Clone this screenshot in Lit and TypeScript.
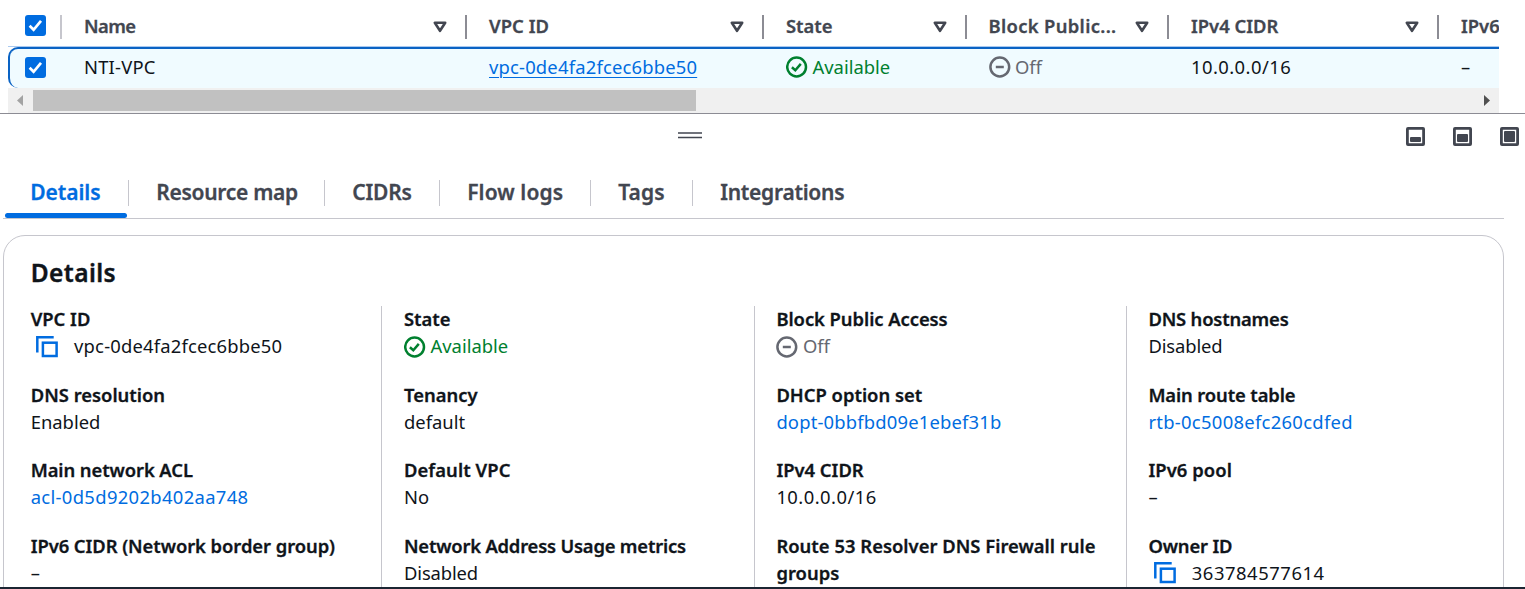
import { LitElement, html, css, svg, nothing } from "lit";
import { customElement, property } from "lit/decorators.js";

type Kind = "text" | "link" | "copy" | "ok" | "off";
// ls / vs: tracking in pixels for the label and the value.
interface Field { label: string; value: string; kind?: Kind; ls?: number; vs?: number; }

const columns: Field[][] = [
  [
    { label: "VPC ID", value: "vpc-0de4fa2fcec6bbe50", kind: "copy", vs: 0.19 },
    { label: "DNS resolution", value: "Enabled" },
    { label: "Main network ACL", value: "acl-0d5d9202b402aa748", kind: "link", ls: -0.08, vs: 0.34 },
    { label: "IPv6 CIDR (Network border group)", value: "–", ls: -0.06 },
  ],
  [
    { label: "State", value: "Available", kind: "ok" },
    { label: "Tenancy", value: "default" },
    { label: "Default VPC", value: "No", ls: 0.08 },
    { label: "Network Address Usage metrics", value: "Disabled", ls: -0.2, vs: -0.12 },
  ],
  [
    { label: "Block Public Access", value: "Off", kind: "off", ls: -0.05 },
    { label: "DHCP option set", value: "dopt-0bbfbd09e1ebef31b", kind: "link", vs: 0.18 },
    { label: "IPv4 CIDR", value: "10.0.0.0/16", vs: 0.46 },
    { label: "Route 53 Resolver DNS Firewall rule groups", value: "", ls: 0.02 },
  ],
  [
    { label: "DNS hostnames", value: "Disabled", ls: -0.18, vs: -0.12 },
    { label: "Main route table", value: "rtb-0c5008efc260cdfed", kind: "link", ls: -0.12, vs: 0.3 },
    { label: "IPv6 pool", value: "–", ls: 0.08 },
    { label: "Owner ID", value: "363784577614", kind: "copy", ls: -0.15, vs: 0.55 },
  ],
];

@customElement("ui-icon")
export class UiIcon extends LitElement {
  @property() name = "";
  static styles = css`
    :host { display: inline-flex; flex: none; }
    svg { display: block; }
  `;
  render() {
    switch (this.name) {
      case "check":
        return html`<svg width="21" height="21" viewBox="0 0 21 21"><rect width="21" height="21" rx="3" fill="#006ce0"/><path d="M4.6 10.8 8.6 14.8 16 5.8" fill="none" stroke="#fff" stroke-width="2.7"/></svg>`;
      case "sort":
        return html`<svg width="14" height="12" viewBox="0 0 14 12"><path d="M1.8 1.8H12.2L7 9.8Z" fill="none" stroke="#424650" stroke-width="2.6" stroke-linejoin="round"/></svg>`;
      case "ok":
        return html`<svg width="22" height="22" viewBox="0 0 22 22" fill="none" stroke="#00802f" stroke-width="2.5"><circle cx="10.6" cy="11" r="9.4"/><path d="M5.9 11.2 9.3 14.2 14.8 7.9"/></svg>`;
      case "off":
        return html`<svg width="22" height="22" viewBox="0 0 22 22" fill="none" stroke="#656871" stroke-width="2.5"><circle cx="10.8" cy="11" r="9.4"/><path d="M6.8 11H14.8"/></svg>`;
      case "copy":
        return html`<svg width="22" height="22" viewBox="0 0 22 22" fill="none" stroke="#006ce0" stroke-width="2.5"><path d="M1.3 16.5V1.3H17.7"/><rect x="6.9" y="6.7" width="13.7" height="13.3"/></svg>`;
      default: {
        const h = this.name === "small" ? 5 : this.name === "medium" ? 8 : 11;
        return html`<svg width="19" height="19" viewBox="0 0 19 19"><rect x="1.4" y="1.4" width="16.2" height="16.2" rx=".6" fill="none" stroke="#424650" stroke-width="2.8"/>${svg`<rect x="4" y=${15 - h} width="11" height=${h} rx="1" fill="#424650"/>`}</svg>`;
      }
    }
  }
}

@customElement("vpc-table")
export class VpcTable extends LitElement {
  static styles = css`
    :host { display: block; height: 113px; padding: 0 26px 0 8px; box-sizing: border-box; }
    .row { display: grid; grid-template-columns: 54px 405px 297px 202.5px 202.5px 270px 60px; overflow: hidden; }
    .head { height: 47px; border-bottom: 1px solid #a9c9f0; box-sizing: border-box; font-weight: 600; color: #424650; -webkit-text-stroke: 0.3px; }
    .cell { display: flex; align-items: center; padding-left: 22px; white-space: nowrap; box-sizing: border-box; min-width: 0; }
    .head .cell { height: 24px; margin-top: 15px; border-right: 2px solid #8c8c94; padding-right: 18px; justify-content: space-between; }
    .head .cell span, .head .last { padding-bottom: 3px; }
    .row .first { padding: 0 0 3px 17px; border-color: #c6c6cd; }
    .head .first { justify-content: flex-start; }
    .row .last { border: 0; padding-right: 0; }
    .body { height: 41px; box-sizing: border-box; background: #f0fbff; border: 2px solid #0a63c4; border-right: 0; border-radius: 10px 0 0 10px; color: #0f141a; border-bottom-width: 0; grid-template-columns: 52px 405px 297px 202.5px 202.5px 270px 60px; }
    .body .cell { padding-bottom: 5px; }
    .body .first { padding-left: 15px; padding-bottom: 3px; }
    .link { color: #006ce0; text-decoration: underline; text-decoration-thickness: 1px; text-underline-offset: 3px; }
    .status { display: flex; align-items: center; gap: 4.5px; }
    .status ui-icon { margin-top: 2px; }
    .ok { color: #00802f; }
    .off { color: #656871; }
    .scroll { height: 25px; display: flex; align-items: center; background: #f0f0f0; }
    .scroll svg { flex: none; display: block; }
    .thumb { width: 663px; height: 21px; background: #c1c1c1; margin-right: auto; }
  `;
  render() {
    const heads: [string, number][] = [["Name", -0.6], ["VPC ID", 0.05], ["State", 0], ["Block Public...", 0.34], ["IPv4 CIDR", 0]];
    return html`
      <div class="row head">
        <div class="cell first"><ui-icon name="check"></ui-icon></div>
        ${heads.map(([h, s]) => html`<div class="cell"><span style="letter-spacing:${s}px">${h}</span><ui-icon name="sort"></ui-icon></div>`)}
        <div class="cell last">IPv6</div>
      </div>
      <div class="row body">
        <div class="cell first"><ui-icon name="check"></ui-icon></div>
        <div class="cell" style="letter-spacing:0.2px">NTI-VPC</div>
        <div class="cell"><span class="link" style="letter-spacing:0.19px">vpc-0de4fa2fcec6bbe50</span></div>
        <div class="cell"><span class="status ok"><ui-icon name="ok"></ui-icon>Available</span></div>
        <div class="cell"><span class="status off"><ui-icon name="off"></ui-icon>Off</span></div>
        <div class="cell" style="letter-spacing:0.44px">10.0.0.0/16</div>
        <div class="cell last">–</div>
      </div>
      <div class="scroll">
        <svg width="25" height="25" viewBox="0 0 25 25"><path d="M15 7V18L9 12.5Z" fill="#a3a3a3"/></svg>
        <div class="thumb"></div>
        <svg width="25" height="25" viewBox="0 0 25 25"><path d="M10 7V18L16 12.5Z" fill="#505050"/></svg>
      </div>`;
  }
}

@customElement("detail-field")
export class DetailField extends LitElement {
  @property({ attribute: false }) field!: Field;
  static styles = css`
    :host { display: block; line-height: 27px; color: #0f141a; }
    .label { font-weight: 600; -webkit-text-stroke: 0.3px; }
    .value { display: flex; align-items: center; gap: 4.5px; height: 27px; white-space: nowrap; }
    ui-icon { margin-top: 2px; }
    .link { color: #006ce0; }
    .ok { color: #00802f; }
    .off { color: #656871; }
    .copy { gap: 16px; padding-left: 5.4px; }
  `;
  render() {
    const { label, value, kind = "text", ls = 0, vs = 0 } = this.field;
    const icon = kind === "copy" || kind === "ok" || kind === "off";
    return html`<div class="label" style="letter-spacing:${ls}px">${label}</div>
      <div class="value ${kind}">${icon ? html`<ui-icon name=${kind}></ui-icon>` : nothing}<span style="letter-spacing:${vs}px">${value}</span></div>`;
  }
}

@customElement("app-root")
export class AppRoot extends LitElement {
  static styles = css`
    :host { display: flex; flex-direction: column; height: 589px; overflow: hidden; background: #fff; box-sizing: border-box; border-bottom: 2px solid #1b2532;
      font-family: "Noto Sans", "Open Sans", sans-serif; font-size: 18.4px; line-height: 27px; color: #0f141a; }
    vpc-table { flex: none; }
    .panel { flex: 1; min-height: 0; border-top: 1px solid #8c8c94; display: flex; flex-direction: column; overflow: hidden; }
    .bar { flex: none; height: 46px; display: grid; grid-template-columns: 678px 24px 1fr; align-items: start; }
    .grip { grid-column: 2; display: block; margin-top: 17px; }
    .sizes { display: flex; gap: 28px; justify-content: flex-end; padding: 13px 6px 0 0; }
    .tabs { flex: none; display: flex; margin: 0 21px 0 3px; height: 59px; box-sizing: border-box; border-bottom: 1px solid #c6c6cd; font-size: 21px; font-weight: 600; color: #424650; align-items: flex-start; -webkit-text-stroke: 0.3px; }
    .tab { height: 26px; line-height: 25px; margin-top: 20px; border-right: 1px solid #c6c6cd; box-sizing: border-box; padding-left: 27.2px; white-space: nowrap; }
    .tab.last { border: 0; }
    .active { position: relative; color: #006ce0; }
    .active::after { content: ""; position: absolute; left: 2px; right: 1px; bottom: -12px; height: 5px; border-radius: 3px; background: #006ce0; }
    .card { flex: none; height: 500px; margin: 16px 21px 0 3px; border: 1px solid #c6c6cd; border-radius: 22px; padding: 23px 26.7px 0; box-sizing: border-box; }
    h2 { font-size: 24.5px; line-height: 28px; font-weight: 600; margin: 0 0 19px; letter-spacing: 0.42px; -webkit-text-stroke: 0.4px; }
    .grid { display: grid; grid-template-columns: 350.3px 373px 372px 372px; }
    .col { display: flex; flex-direction: column; gap: 21.6px; border-left: 1px solid #c6c6cd; padding-left: 21.4px; box-sizing: border-box; height: 400px; padding-right: 22px; }
    .col:nth-child(2) { padding-left: 22px; }
    .col.first { border: 0; padding: 0; }
    .col detail-field:first-child { margin-top: -1px; }
  `;
  render() {
    const tabs: [string, number, number][] = [["Details", 126, -0.05], ["Resource map", 196, -0.28], ["CIDRs", 115, -0.2], ["Flow logs", 151, 0.1], ["Tags", 102, 0.1], ["Integrations", 160, -0.27]];
    return html`
      <vpc-table></vpc-table>
      <div class="panel">
        <div class="bar">
          <svg class="grip" width="24" height="8" viewBox="0 0 24 8"><path d="M0 2H24M0 6.5H24" stroke="#424650" stroke-width="1.6"/></svg>
          <div class="sizes"><ui-icon name="small"></ui-icon><ui-icon name="medium"></ui-icon><ui-icon name="large"></ui-icon></div>
        </div>
        <div class="tabs">
          ${tabs.map(([t, w, s], i) => html`<div class="tab ${i === 0 ? "active" : i === 5 ? "last" : ""}" style="width:${w}px;letter-spacing:${s}px">${t}</div>`)}
        </div>
        <div class="card">
          <h2>Details</h2>
          <div class="grid">
            ${columns.map((c, i) => html`<div class="col ${i ? "" : "first"}">${c.map((f) => html`<detail-field .field=${f}></detail-field>`)}</div>`)}
          </div>
        </div>
      </div>`;
  }
}
